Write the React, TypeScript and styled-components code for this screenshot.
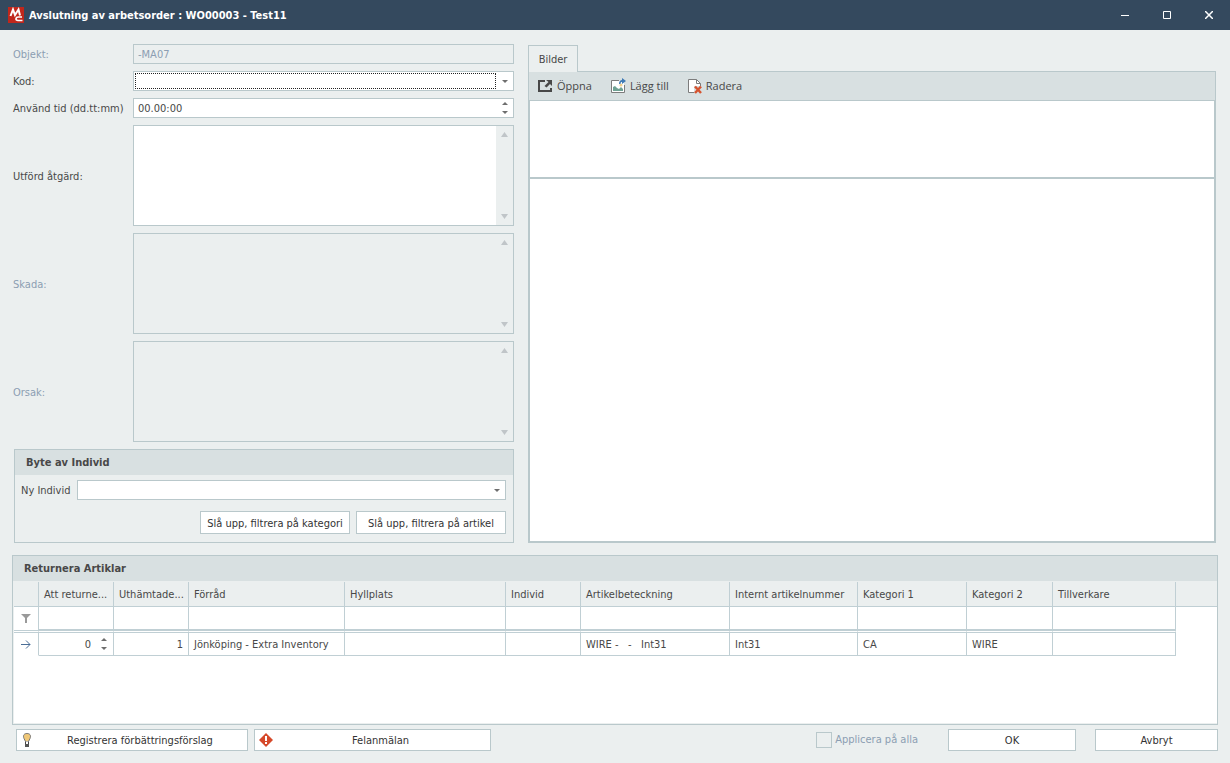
import React from "react";
import styled, { createGlobalStyle } from "styled-components";

const c = {
  title: "#34495e",
  bg: "#ebefef",
  band: "#d8e0e1",
  line: "#b9c8cb",
  grid: "#c0cfd4",
  text: "#484848",
  muted: "#8c9eb2",
  arrow: "#6e6e6e",
  faint: "#c0c5c8",
};

const Global = createGlobalStyle`
  *, *::before, *::after { box-sizing: border-box; }
  body { margin: 0; background: ${c.bg}; }
  body, button, input, select, textarea {
    font-family: "DejaVu Sans Condensed", "DejaVu Sans", sans-serif;
    font-size: 11px;
    line-height: 14px;
    color: ${c.text};
  }
  svg { display: block; flex: none; }
`;

const Window = styled.div`
  display: flex;
  flex-direction: column;
  min-height: 100vh;
`;

const TitleBar = styled.header`
  display: flex;
  align-items: center;
  gap: 5px;
  height: 30px;
  padding-left: 8px;
  background: ${c.title};
  color: #fff;
`;

const Title = styled.h1`
  flex: 1;
  margin: 0;
  padding-top: 2px;
  font-size: 11px;
  line-height: 14px;
  font-weight: bold;
`;

const CaptionButtons = styled.div`
  display: flex;
`;

const CaptionButton = styled.button`
  display: flex;
  align-items: center;
  justify-content: center;
  width: 42px;
  height: 30px;
  padding: 0;
  border: 0;
  background: none;
`;

const Upper = styled.main`
  display: grid;
  grid-template-columns: 501px minmax(0, 1fr);
  gap: 14px;
  padding: 14px 14px 12px 13px;
`;

const Form = styled.form`
  display: flex;
  flex-direction: column;
  gap: 7px;
`;

const Field = styled.div`
  display: grid;
  grid-template-columns: 120px minmax(0, 1fr);
  align-items: center;
`;

const Label = styled.label<{ $muted?: boolean }>`
  padding-top: 2px;
  color: ${(p) => (p.$muted ? c.muted : c.text)};
  white-space: nowrap;
`;

const Box = styled.div<{ $muted?: boolean; $tall?: boolean }>`
  display: flex;
  flex: 1;
  height: ${(p) => (p.$tall ? 101 : 20)}px;
  border: 1px solid ${c.line};
  background: ${(p) => (p.$muted ? c.bg : "#fff")};
`;

const TextInput = styled.input`
  flex: 1;
  min-width: 0;
  padding: 2px 4px 0;
  border: 0;
  outline: 0;
  background: none;
  &:disabled { color: ${c.muted}; }
`;

const TextArea = styled.textarea`
  flex: 1;
  min-width: 0;
  padding: 2px 4px;
  border: 0;
  outline: 0;
  resize: none;
  overflow: hidden;
  background: none;
`;

const Select = styled.select<{ $focused?: boolean }>`
  flex: 1;
  min-width: 0;
  margin: 1px 0 1px 1px;
  padding: 0 2px;
  appearance: none;
  outline: 0;
  border: 1px dotted ${(p) => (p.$focused ? "#222" : "transparent")};
  background: none;
`;

const DropMark = styled.span`
  display: flex;
  align-items: center;
  justify-content: center;
  width: 17px;
  pointer-events: none;
`;

const ScrollTrack = styled.span`
  display: flex;
  flex-direction: column;
  justify-content: space-between;
  align-items: center;
  width: 17px;
  padding: 6px 0;
  background: ${c.bg};
`;

const Spinner = styled.span`
  display: flex;
  flex-direction: column;
  justify-content: center;
  width: 17px;
  flex: none;
`;

const SpinButton = styled.button`
  display: flex;
  align-items: center;
  justify-content: center;
  height: 9px;
  padding: 0;
  border: 0;
  background: none;
`;

const Group = styled.section`
  margin-left: 1px;
  border: 1px solid ${c.line};
`;

const Band = styled.h2`
  margin: 0;
  height: 25px;
  padding: 6px 11px 0;
  background: ${c.band};
  font-size: 11px;
  line-height: 14px;
  font-weight: bold;
`;

const GroupBody = styled.div`
  display: flex;
  flex-direction: column;
  gap: 11px;
  padding: 5px 7px 8px 6px;
`;

const Line = styled.div<{ $end?: boolean }>`
  display: flex;
  align-items: center;
  justify-content: ${(p) => (p.$end ? "flex-end" : "flex-start")};
  gap: 6px;
`;

const Button = styled.button<{ $width: number; $height?: number }>`
  display: flex;
  align-items: center;
  width: ${(p) => p.$width}px;
  height: ${(p) => p.$height ?? 22}px;
  padding: 0 4px;
  border: 1px solid ${c.line};
  background: #fff;
  color: #333;
  white-space: nowrap;
`;

const ButtonText = styled.span`
  flex: 1;
  padding-top: 2px;
  text-align: center;
`;

const Pictures = styled.section`
  display: flex;
  flex-direction: column;
  padding-top: 1px;
`;

const Tab = styled.button`
  position: relative;
  z-index: 1;
  align-self: flex-start;
  width: 50px;
  height: 27px;
  margin-bottom: -1px;
  padding: 2px 0 0;
  border: 1px solid ${c.line};
  border-bottom: 0;
  background: ${c.bg};
`;

const TabPage = styled.div`
  flex: 1;
  display: flex;
  flex-direction: column;
  border: 1px solid ${c.line};
`;

const Toolbar = styled.div`
  display: flex;
  align-items: center;
  gap: 19px;
  height: 28px;
  padding-left: 9px;
  background: ${c.band};
`;

const Tool = styled.button`
  display: flex;
  align-items: center;
  gap: 4px;
  padding: 0;
  border: 0;
  background: none;
  font-family: "Open Sans", "Noto Sans", sans-serif;
  font-size: 11px;
  line-height: 16px;
`;

const Pane = styled.div<{ $grow?: boolean }>`
  flex: ${(p) => (p.$grow ? "1" : "none")};
  height: ${(p) => (p.$grow ? "auto" : "78px")};
  border: 1px solid ${c.line};
  background: #fff;
`;

const Articles = styled.section`
  flex: 1;
  display: flex;
  flex-direction: column;
  margin: 0 12px;
  border: 1px solid ${c.line};
`;

const GridArea = styled.div`
  flex: 1;
  margin: 1px 0 1px 1px;
  background: #fff;
`;

const Table = styled.table`
  width: 100%;
  table-layout: fixed;
  border-collapse: separate;
  border-spacing: 0;
`;

const Th = styled.th<{ $plain?: boolean }>`
  height: 25px;
  padding: 2px 0 0 5px;
  background: ${c.bg};
  border-bottom: 1px solid ${c.grid};
  border-right: ${(p) => (p.$plain ? 0 : 1)}px solid ${c.grid};
  font-weight: normal;
  text-align: left;
  white-space: nowrap;
  overflow: hidden;
`;

const FilterCell = styled.td<{ $mark?: boolean }>`
  height: 24px;
  padding: ${(p) => (p.$mark ? "0 7px" : "0")};
  border-right: 1px solid ${c.grid};
  border-bottom: ${(p) => (p.$mark ? 1 : 2)}px solid ${c.grid};
`;

const Cell = styled.td<{ $right?: boolean; $mark?: boolean; $edit?: boolean }>`
  height: 25px;
  padding: ${(p) => (p.$mark ? "1px 7px 0" : p.$edit ? "0 1px 0 5px" : "2px 5px 0")};
  border-top: 1px solid #fff;
  border-right: 1px solid ${c.grid};
  border-bottom: 1px solid ${(p) => (p.$mark ? "#fff" : c.grid)};
  box-shadow: inset 0 1px 0 ${c.grid};
  text-align: ${(p) => (p.$right ? "right" : "left")};
  white-space: pre;
`;

const Amount = styled.span`
  display: flex;
  align-items: center;
  justify-content: flex-end;
  gap: 4px;
`;

const AmountInput = styled.input`
  flex: 1;
  min-width: 0;
  padding: 2px 0 0;
  border: 0;
  outline: 0;
  background: none;
  text-align: right;
`;

const Empty = styled.td`
  padding: 0;
`;

const Footer = styled.footer`
  display: flex;
  align-items: center;
  padding: 4px 12px 12px 16px;
  gap: 6px;
`;

const Choices = styled.div`
  flex: 1;
  display: flex;
  align-items: center;
  justify-content: flex-end;
  gap: 19px;
`;

const CheckLabel = styled.label`
  display: flex;
  align-items: center;
  gap: 3px;
  margin-right: 11px;
  color: ${c.muted};
`;

const CheckBox = styled.input`
  appearance: none;
  width: 16px;
  height: 16px;
  margin: 0;
  border: 1px solid ${c.line};
`;

const Triangle = ({ up, color = c.arrow, big }: { up?: boolean; color?: string; big?: boolean }) => {
  const w = big ? 7 : 6;
  const h = big ? 5 : 3;
  return (
    <svg width={w} height={h} viewBox={`0 0 ${w} ${h}`} aria-hidden="true">
      <path d={up ? `M0 ${h}H${w}L${w / 2} 0Z` : `M0 0H${w}L${w / 2} ${h}Z`} fill={color} />
    </svg>
  );
};

const Logo = () => (
  <svg width="16" height="16" viewBox="0 0 16 16" aria-hidden="true">
    <rect width="16" height="16" fill="#c0271c" />
    <path d="M2.500 9L5 2.500L7 8L10.500 2.500L12 8.500" fill="none" stroke="#fff" strokeWidth="2" />
    <path d="M14 10H10.500C7.500 10 7 13.500 10 13.500H14.500" fill="none" stroke="#fff" strokeWidth="1.700" />
  </svg>
);

const OpenIcon = () => (
  <svg width="15" height="12" viewBox="0 0 15 12" aria-hidden="true">
    <path d="M7 0H0V12H14V8H12V10H2V2H7Z" fill="#484848" />
    <path d="M8 0H14V6L12 4L8.500 7.500L6.500 6L10.500 2Z" fill="#484848" />
  </svg>
);

const AddIcon = () => (
  <svg width="15" height="16" viewBox="0 0 15 16" aria-hidden="true">
    <path d="M8 2.500H0.500V14.500H13.500V7" fill="#fff" stroke="#7c7c7c" />
    <path d="M8 3H13V14H8Z" fill="#fff" />
    <path d="M2 13V9L4 8L6 10L8 11L10 9L12 11V13Z" fill="#6fa294" />
    <circle cx="10" cy="7" r="1.500" fill="#f0cf8e" />
    <path d="M8 6C8 3 9.500 2 11 2V0L15 3L11 6V4C10 4 9.500 4.500 9.500 6Z" fill="#3f7ab5" />
  </svg>
);

const DeleteIcon = () => (
  <svg width="14" height="16" viewBox="0 0 14 16" aria-hidden="true">
    <path d="M0.500 1.500H8.500L12.500 5.500V14.500H0.500Z" fill="#fff" stroke="#7c7c7c" />
    <path d="M8.500 1.500V5.500H12.500" fill="none" stroke="#7c7c7c" />
    <path d="M6 8H14V16H6Z" fill={c.band} />
    <path d="M7 8.500L13 15M13 8.500L7 15" stroke="#d6532f" strokeWidth="2.500" />
  </svg>
);

const BulbIcon = () => (
  <svg width="16" height="16" viewBox="0 0 16 16" aria-hidden="true">
    <path d="M4.500 9.500L3 6.500C1.500 3 3.500 1.500 6 1.500S10.500 3 9 6.500L7.500 9.500Z" fill="#f0c878" stroke="#777" />
    <path d="M4.500 9.500V14.500H7.500V9.500" fill="#fff" stroke="#444" />
    <path d="M4 12H8V15H4Z" fill="#555" />
  </svg>
);

const AlertIcon = () => (
  <svg width="16" height="14" viewBox="0 0 16 14" aria-hidden="true">
    <path d="M7 0L14 7L7 14L0 7Z" fill="#d6492a" />
    <path d="M6 3H8V8H6ZM6 9H8V11H6Z" fill="#fff" />
  </svg>
);

const MemoField = ({ id, label, muted }: { id: string; label: string; muted?: boolean }) => (
  <Field>
    <Label htmlFor={id} $muted={muted}>{label}</Label>
    <Box $tall $muted={muted}>
      <TextArea id={id} disabled={muted} />
      <ScrollTrack>
        <Triangle up big color={c.faint} />
        <Triangle big color={c.faint} />
      </ScrollTrack>
    </Box>
  </Field>
);

const Spin = () => (
  <Spinner>
    <SpinButton type="button" aria-label="Öka"><Triangle up /></SpinButton>
    <SpinButton type="button" aria-label="Minska"><Triangle /></SpinButton>
  </Spinner>
);

const columns = [
  { name: "Att returne...", width: 75 },
  { name: "Uthämtade...", width: 75 },
  { name: "Förråd", width: 156 },
  { name: "Hyllplats", width: 161 },
  { name: "Individ", width: 75 },
  { name: "Artikelbeteckning", width: 149 },
  { name: "Internt artikelnummer", width: 128 },
  { name: "Kategori 1", width: 109 },
  { name: "Kategori 2", width: 86 },
  { name: "Tillverkare", width: 123 },
];

const rowValues = ["Jönköping - Extra Inventory", "", "", "WIRE -   -   Int31", "Int31", "CA", "WIRE", ""];

export default function App() {
  return (
    <Window>
      <Global />
      <TitleBar>
        <Logo />
        <Title>Avslutning av arbetsorder : WO00003 - Test11</Title>
        <CaptionButtons>
          <CaptionButton aria-label="Minimera">
            <svg width="8" height="8" viewBox="0 0 8 8"><path d="M0 4.500H8" stroke="#fff" /></svg>
          </CaptionButton>
          <CaptionButton aria-label="Maximera">
            <svg width="8" height="8" viewBox="0 0 8 8"><path d="M0.500 0.500H7.500V7.500H0.500Z" fill="none" stroke="#fff" /></svg>
          </CaptionButton>
          <CaptionButton aria-label="Stäng">
            <svg width="8" height="8" viewBox="0 0 8 8"><path d="M0 0L8 8M8 0L0 8" stroke="#fff" strokeWidth="1.500" /></svg>
          </CaptionButton>
        </CaptionButtons>
      </TitleBar>

      <Upper>
        <Form>
          <Field>
            <Label htmlFor="objekt" $muted>Objekt:</Label>
            <Box $muted><TextInput id="objekt" defaultValue="-MA07" disabled /></Box>
          </Field>
          <Field>
            <Label htmlFor="kod">Kod:</Label>
            <Box>
              <Select id="kod" $focused><option value="" /></Select>
              <DropMark><Triangle /></DropMark>
            </Box>
          </Field>
          <Field>
            <Label htmlFor="tid">Använd tid (dd.tt:mm)</Label>
            <Box><TextInput id="tid" defaultValue="00.00:00" /><Spin /></Box>
          </Field>
          <MemoField id="atgard" label="Utförd åtgärd:" />
          <MemoField id="skada" label="Skada:" muted />
          <MemoField id="orsak" label="Orsak:" muted />
          <Group>
            <Band>Byte av Individ</Band>
            <GroupBody>
              <Line>
                <Label htmlFor="individ">Ny Individ</Label>
                <Box>
                  <Select id="individ"><option value="" /></Select>
                  <DropMark><Triangle /></DropMark>
                </Box>
              </Line>
              <Line $end>
                <Button type="button" $width={150} $height={23}><ButtonText>Slå upp, filtrera på kategori</ButtonText></Button>
                <Button type="button" $width={150} $height={23}><ButtonText>Slå upp, filtrera på artikel</ButtonText></Button>
              </Line>
            </GroupBody>
          </Group>
        </Form>

        <Pictures>
          <Tab type="button">Bilder</Tab>
          <TabPage>
            <Toolbar>
              <Tool type="button"><OpenIcon />Öppna</Tool>
              <Tool type="button"><AddIcon />Lägg till</Tool>
              <Tool type="button"><DeleteIcon />Radera</Tool>
            </Toolbar>
            <Pane />
            <Pane $grow />
          </TabPage>
        </Pictures>
      </Upper>

      <Articles>
        <Band>Returnera Artiklar</Band>
        <GridArea>
          <Table>
            <colgroup>
              <col width={25} />
              {columns.map((col) => <col key={col.name} width={col.width} />)}
              <col />
            </colgroup>
            <thead>
              <tr>
                <Th />
                {columns.map((col) => <Th key={col.name} scope="col">{col.name}</Th>)}
                <Th $plain />
              </tr>
            </thead>
            <tbody>
              <tr>
                <FilterCell $mark>
                  <svg width="10" height="9" viewBox="0 0 10 9" aria-hidden="true"><path d="M0 0H10L6 4V9H4V4Z" fill="#9a9a9a" /></svg>
                </FilterCell>
                {columns.map((col) => <FilterCell key={col.name} />)}
                <Empty />
              </tr>
              <tr>
                <Cell $mark>
                  <svg width="10" height="9" viewBox="0 0 10 9" aria-hidden="true"><path d="M0 4.500H9M5 0.500L9 4.500L5 8.500" fill="none" stroke="#4a6d96" /></svg>
                </Cell>
                <Cell $right $edit>
                  <Amount><AmountInput aria-label="Att returnera" defaultValue="0" /><Spin /></Amount>
                </Cell>
                <Cell $right>1</Cell>
                {rowValues.map((value, i) => <Cell key={i}>{value}</Cell>)}
                <Empty />
              </tr>
            </tbody>
          </Table>
        </GridArea>
      </Articles>

      <Footer>
        <Button $width={232}><BulbIcon /><ButtonText>Registrera förbättringsförslag</ButtonText></Button>
        <Button $width={237}><AlertIcon /><ButtonText>Felanmälan</ButtonText></Button>
        <Choices>
          <CheckLabel><CheckBox type="checkbox" disabled />Applicera på alla</CheckLabel>
          <Button $width={128}><ButtonText>OK</ButtonText></Button>
          <Button $width={123}><ButtonText>Avbryt</ButtonText></Button>
        </Choices>
      </Footer>
    </Window>
  );
}
